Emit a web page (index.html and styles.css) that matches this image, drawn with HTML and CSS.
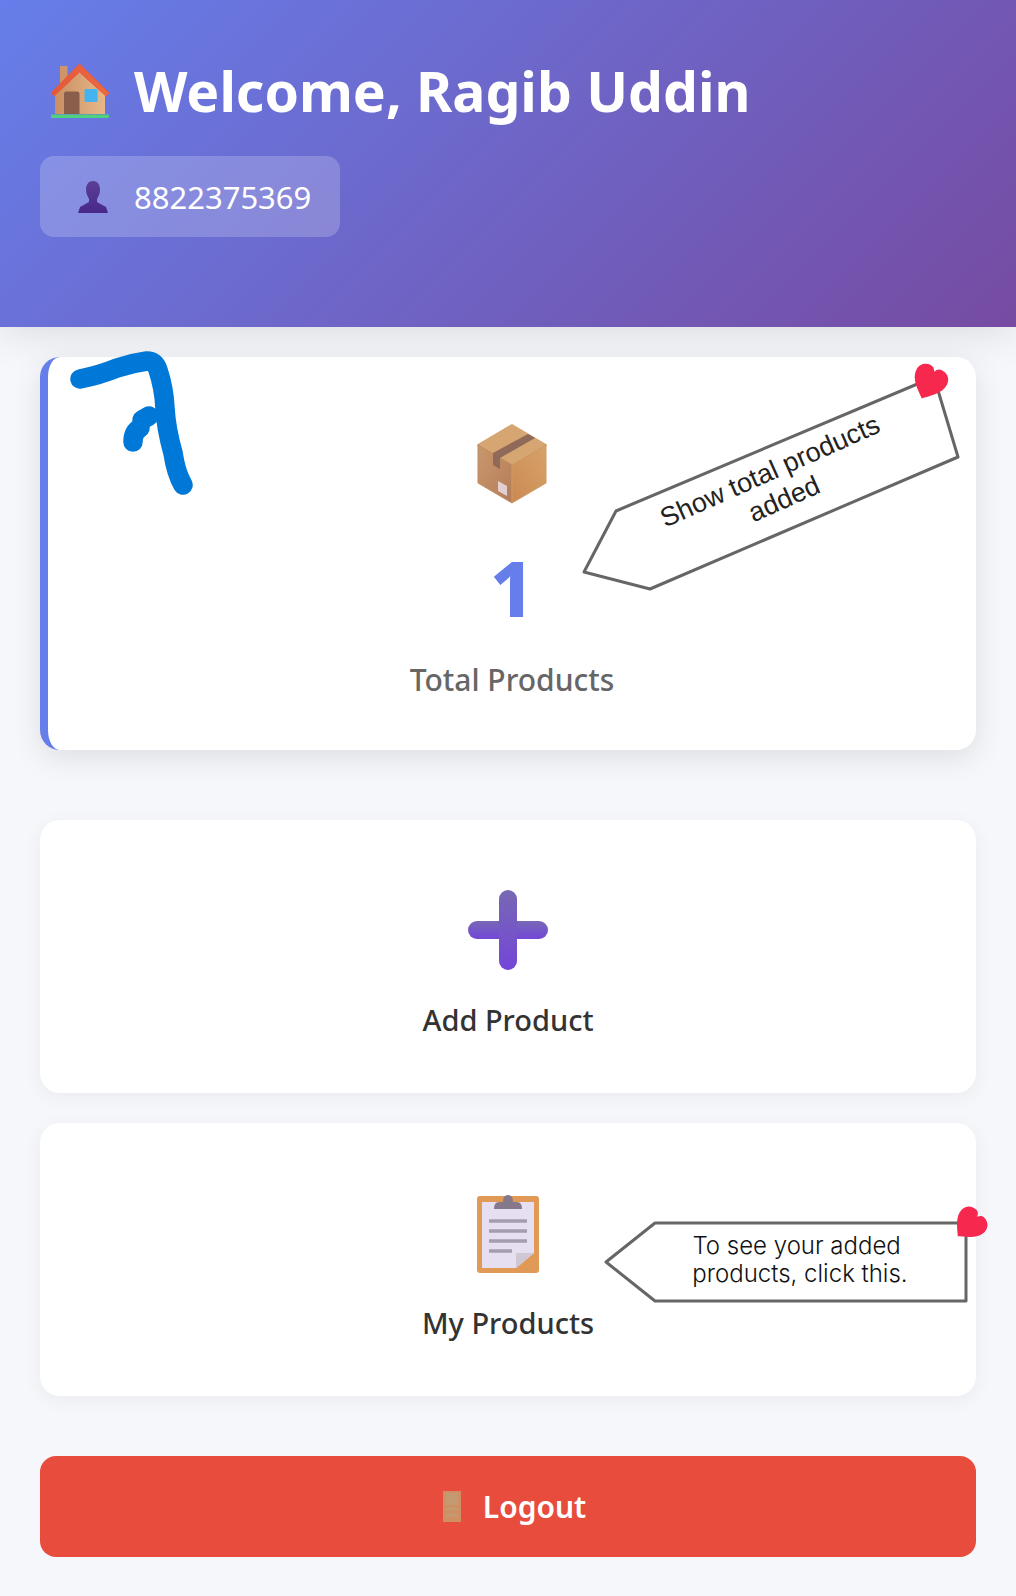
FILE: index.html
```html
<!DOCTYPE html>
<html lang="en">
<head>
<meta charset="UTF-8">
<meta name="viewport" content="width=device-width, initial-scale=1.0">
<title>Dashboard</title>
<link rel="stylesheet" href="styles.css">
</head>
<body>
<svg class="defs" width="0" height="0">
    <defs>
        <linearGradient id="tan" x1="0" y1="0" x2="1" y2="0">
            <stop offset="0" stop-color="#c98f62"/>
            <stop offset="1" stop-color="#e8b888"/>
        </linearGradient>
        <linearGradient id="roof" x1="0" y1="0" x2="1" y2="0">
            <stop offset="0" stop-color="#e2573a"/>
            <stop offset="1" stop-color="#ee6a3e"/>
        </linearGradient>
        <linearGradient id="boxl" x1="0" y1="0" x2="1" y2="1">
            <stop offset="0" stop-color="#c9986c"/>
            <stop offset="1" stop-color="#b47c5a"/>
        </linearGradient>
        <linearGradient id="boxr" x1="0" y1="1" x2="1" y2="0">
            <stop offset="0" stop-color="#c98a52"/>
            <stop offset="1" stop-color="#d8a26a"/>
        </linearGradient>
        <linearGradient id="purple" x1="0" y1="0" x2="0" y2="1">
            <stop offset="0" stop-color="#7768b4"/>
            <stop offset="1" stop-color="#7446d8"/>
        </linearGradient>
        <linearGradient id="person" x1="0" y1="0" x2="0" y2="1">
            <stop offset="0" stop-color="#5c3f96"/>
            <stop offset="1" stop-color="#47288a"/>
        </linearGradient>
    </defs>
</svg>

<header class="header">
    <h1 class="welcome">
        <svg class="house" viewBox="0 0 58 54">
            <rect x="9" y="2" width="7.5" height="18" fill="#cf9468"/>
            <path d="M4 28 L29 4 L54 28 V50 H4 Z" fill="url(#tan)"/>
            <path d="M0 29 L28.5 0 L58 29 L55 32 L28.5 8 L3 32 Z" fill="url(#roof)" stroke="#e8593a" stroke-width="1" stroke-linejoin="round"/>
            <path d="M13 50 V30 Q13 27.5 15 27.5 H26 Q28.5 27.5 28.5 30 V50 Z" fill="#8a5e4a"/>
            <rect x="33.5" y="25" width="13" height="13" rx="1" fill="#45b4ee"/>
            <rect x="0" y="50.5" width="58" height="3.5" rx="1" fill="#4fd17f"/>
        </svg>
        <span>Welcome, Ragib Uddin</span>
    </h1>
    <div class="phone">
        <svg class="person" viewBox="0 0 30 32">
            <path d="M15 0 C10 0 8 4 8 9 C8 13 10 16 11 18 L11 21 L2 26 L0 32 H30 L28 26 L19 21 L19 18 C20 16 22 13 22 9 C22 4 20 0 15 0 Z" fill="url(#person)"/>
        </svg>
        <span>8822375369</span>
    </div>
</header>

<main class="main">
    <section class="card stat">
        <svg class="scribble" viewBox="0 0 150 150">
            <path d="M10 31 Q30 27 47 20 Q62 15 77 13 Q85 13 88 22 Q94 40 95 60 Q96 80 103 105 Q106 125 113 137" fill="none" stroke="#0078d7" stroke-width="19.5" stroke-linecap="round" stroke-linejoin="round"/>
            <path d="M63 94 Q63 84 70 80 M72 72 L79 68" fill="none" stroke="#0078d7" stroke-width="19.5" stroke-linecap="round"/>
        </svg>
        <svg class="icon" viewBox="0 0 70 80">
            <path d="M35 1 L69 21 L35 41 L1 21 Z" fill="#d6a672" stroke="#d6a672" stroke-width="2" stroke-linejoin="round"/>
            <path d="M1 21 L35 41 V79 L1 59 Z" fill="url(#boxl)" stroke="#c08a60" stroke-width="1" stroke-linejoin="round"/>
            <path d="M69 21 L35 41 V79 L69 59 Z" fill="url(#boxr)" stroke="#d09a62" stroke-width="1" stroke-linejoin="round"/>
            <path d="M16 29 L51 10 L58 14 L23 34 V45 L16 41 Z" fill="#8f6a58"/>
            <path d="M21 57 L30 62 V72 L21 67 Z" fill="#e3cfd2"/>
        </svg>
        <div class="count">1</div>
        <div class="stat-label">Total Products</div>
        <svg class="note note-total" viewBox="0 0 400 240">
            <polygon points="4,205 36,144 354,10 378,90 70,222" class="note-shape"/>
            <text class="note-text note-text-big" transform="translate(197 111) rotate(-24)" text-anchor="middle">
                <tspan x="0" y="0">Show total products</tspan>
                <tspan x="-2" y="31">added</tspan>
            </text>
            <path class="heart" transform="translate(349 16) rotate(25) scale(1.55)" d="M0 11 C-3 8 -11 3 -11 -4 C-11 -9 -7 -11 -4 -11 C-2 -11 -1 -10 0 -8 C1 -10 2 -11 4 -11 C7 -11 11 -9 11 -4 C11 3 3 8 0 11 Z"/>
        </svg>
    </section>

    <section class="card action">
        <svg class="icon" viewBox="0 0 80 80">
            <rect x="0" y="31" width="80" height="18" rx="9" fill="url(#purple)"/>
            <rect x="31" y="0" width="18" height="80" rx="9" fill="url(#purple)"/>
        </svg>
        <div class="action-label">Add Product</div>
    </section>

    <section class="card action">
        <svg class="icon" viewBox="0 0 80 80">
            <rect x="9" y="3" width="62" height="77" rx="3" fill="#e09a55"/>
            <path d="M14 9 H66 V60 L48 75 H14 Z" fill="#e6dff2"/>
            <path d="M48 75 V60 H66 Z" fill="#cfc8d4"/>
            <path d="M26 16 Q26 9 31 9 H35 Q35 2 40 2 Q45 2 45 9 H49 Q54 9 54 16 Z" fill="#84788a"/>
            <path d="M21 28 H59 M21 38 H59 M21 48 H59 M21 58 H44" stroke="#a59cae" stroke-width="3.5" fill="none"/>
        </svg>
        <div class="action-label">My Products</div>
        <svg class="note note-list" viewBox="0 0 390 110">
            <polygon points="3,58 52,19 363,19 363,97 52,97" class="note-shape"/>
            <text class="note-text note-text-light" text-anchor="middle">
                <tspan x="197" y="50">To see your added</tspan>
                <tspan x="197" y="78">products, click this.</tspan>
            </text>
            <path class="heart" transform="translate(366 21) rotate(45) scale(1.45)" d="M0 11 C-3 8 -11 3 -11 -4 C-11 -9 -7 -11 -4 -11 C-2 -11 -1 -10 0 -8 C1 -10 2 -11 4 -11 C7 -11 11 -9 11 -4 C11 3 3 8 0 11 Z"/>
        </svg>
    </section>

    <button class="logout">
        <svg class="door" viewBox="0 0 18 31">
            <rect width="18" height="31" fill="#cf8f62"/>
            <rect x="3" y="2" width="12" height="12" fill="#c49a72"/>
            <path d="M3 18 H15 M3 24 H15" stroke="#c49a72" stroke-width="3"/>
        </svg>
        <span>Logout</span>
    </button>
</main>
</body>
</html>
```

FILE: styles.css
```css
body {
    font-family: "Noto Sans", "Open Sans", sans-serif;
    margin: 0;
    padding: 0;
    background-color: #f5f7fb;
    color: #333;
}
.defs {
    position: absolute;
}
.header {
    height: 327px;
    box-sizing: border-box;
    padding: 60px 40px 0;
    background: linear-gradient(135deg, #667eea 0%, #764ba2 100%);
    box-shadow: 0 4px 40px rgba(0, 0, 0, 0.12);
    color: #fff;
}
.welcome {
    display: flex;
    align-items: center;
    gap: 25px;
    height: 62px;
    margin: 0 0 34px 11px;
    font-size: 55.3px;
    font-weight: 700;
    line-height: 62px;
}
.house {
    width: 58px;
    height: 54px;
}
.phone {
    display: flex;
    align-items: center;
    gap: 26px;
    width: 300px;
    height: 81px;
    box-sizing: border-box;
    padding-left: 38px;
    background-color: rgba(255, 255, 255, 0.2);
    border-radius: 14px;
    font-size: 31px;
}
.person {
    flex-shrink: 0;
    width: 30px;
    height: 32px;
}
.main {
    padding: 30px 40px 39px;
}
.card {
    position: relative;
    display: flex;
    flex-direction: column;
    align-items: center;
    box-sizing: border-box;
    background-color: #fff;
    border-radius: 20px;
}
.stat {
    height: 393px;
    padding-top: 67px;
    margin-bottom: 70px;
    border-left: 8px solid #667eea;
    box-shadow: 0 8px 30px rgba(0, 0, 0, 0.1);
}
.action {
    height: 273px;
    padding-top: 70px;
    margin-bottom: 30px;
    box-shadow: 0 4px 20px rgba(0, 0, 0, 0.05);
}
.icon {
    width: 80px;
    height: 80px;
}
.count {
    margin-top: 39px;
    font-size: 76px;
    font-weight: 800;
    line-height: 90px;
    color: #667eea;
}
.stat-label {
    margin-top: 27px;
    font-size: 30px;
    font-weight: 500;
    line-height: 40px;
    color: #666;
}
.action-label {
    margin-top: 30px;
    font-size: 29px;
    font-weight: 500;
    line-height: 40px;
    color: #333;
}
.scribble {
    position: absolute;
    left: 22px;
    top: -9px;
    width: 150px;
    height: 150px;
}
.note {
    position: absolute;
    overflow: visible;
}
.note-total {
    left: 532px;
    top: 10px;
    width: 400px;
    height: 240px;
}
.note-list {
    left: 563px;
    top: 81px;
    width: 390px;
    height: 110px;
}
.note-shape {
    fill: #fff;
    stroke: #666;
    stroke-width: 3;
    stroke-linejoin: round;
}
.note-text {
    font-family: "Liberation Sans", Arial, sans-serif;
    font-size: 25px;
    fill: #222;
}
.note-text-big {
    font-size: 27px;
}
.note-text-light {
    font-family: Inter, "Liberation Sans", sans-serif;
    font-size: 24px;
    font-weight: 300;
    fill: #111;
}
.heart {
    fill: #f7284e;
}
.logout {
    display: flex;
    align-items: center;
    justify-content: center;
    gap: 22px;
    width: 100%;
    height: 101px;
    margin-top: 60px;
    padding-left: 19px;
    border: none;
    border-radius: 16px;
    background-color: #e74c3c;
    color: #fff;
    font-family: inherit;
    font-size: 30px;
    font-weight: 600;
    cursor: pointer;
}
.door {
    width: 18px;
    height: 31px;
}
```
